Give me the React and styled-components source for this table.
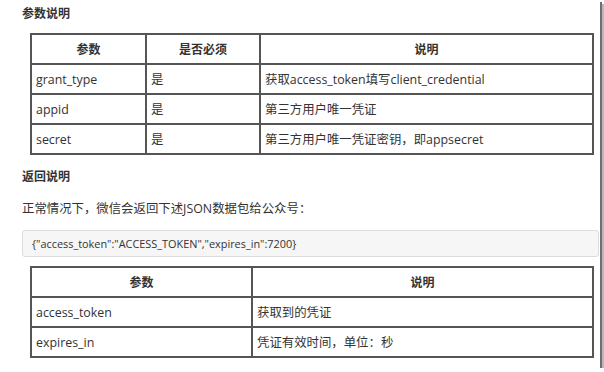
import React from "react";
import styled, { createGlobalStyle } from "styled-components";

const Global = createGlobalStyle`
  html, body { margin: 0; padding: 0; background: #fff; }
  body { font-family: "Open Sans", "Noto Sans CJK SC", sans-serif; color: #333; }
`;

const Frame = styled.div`
  width: 600px;
  height: 368px;
  box-sizing: border-box;
  padding-left: 22px;
  background: #fff;
  box-shadow: 2px 2px 0 #6f6f6f, 4px 4px 0 #b8b8b8;
  overflow: hidden;
  display: flex;
  flex-direction: column;
  font-size: 12.4px;
`;

const Heading = styled.div`
  height: 20px;
  line-height: 20px;
  font-weight: bold;
  font-size: 12px;
  margin-top: ${(p) => p.$mt}px;
`;

const Para = styled.div`
  height: 20px;
  line-height: 20px;
  font-size: 12.4px;
  margin-top: ${(p) => p.$mt}px;
`;

const Code = styled.div`
  margin-top: ${(p) => p.$mt}px;
  width: 577px;
  height: 27px;
  box-sizing: border-box;
  border: 1px solid #dcdcdc;
  border-radius: 3px;
  background: #f6f6f6;
  padding-left: 9px;
  line-height: 25px;
  font-size: 10.9px;
  white-space: nowrap;
`;

const Table = styled.table`
  margin-top: ${(p) => p.$mt}px;
  margin-left: 8px;
  width: 564px;
  border-collapse: collapse;
  table-layout: fixed;
  font-size: 12.4px;
`;

const Row = styled.tr`
  height: 30px;
`;

const Th = styled.th`
  border: 2px solid #555;
  font-weight: bold;
  font-size: 12px;
  text-align: center;
  padding: 0 5px;
  width: ${(p) => (p.$w ? `${p.$w}px` : "auto")};
`;

const Td = styled.td`
  border: 2px solid #555;
  padding: 0 4px;
  text-align: left;
  white-space: nowrap;
`;

const params = [
  ["grant_type", "是", "获取access_token填写client_credential"],
  ["appid", "是", "第三方用户唯一凭证"],
  ["secret", "是", "第三方用户唯一凭证密钥，即appsecret"],
];

const results = [
  ["access_token", "获取到的凭证"],
  ["expires_in", "凭证有效时间，单位：秒"],
];

export default function App() {
  return (
    <>
      <Global />
      <Frame>
        <Heading $mt={4}>参数说明</Heading>
        <Table $mt={9}>
          <thead>
            <Row>
              <Th $w={103}>参数</Th>
              <Th $w={102}>是否必须</Th>
              <Th>说明</Th>
            </Row>
          </thead>
          <tbody>
            {params.map((r) => (
              <Row key={r[0]}>
                <Td>{r[0]}</Td>
                <Td>{r[1]}</Td>
                <Td>{r[2]}</Td>
              </Row>
            ))}
          </tbody>
        </Table>
        <Heading $mt={12}>返回说明</Heading>
        <Para $mt={12}>正常情况下，微信会返回下述JSON数据包给公众号：</Para>
        <Code $mt={11}>{'{"access_token":"ACCESS_TOKEN","expires_in":7200}'}</Code>
        <Table $mt={9}>
          <thead>
            <Row>
              <Th $w={209}>参数</Th>
              <Th>说明</Th>
            </Row>
          </thead>
          <tbody>
            {results.map((r) => (
              <Row key={r[0]}>
                <Td>{r[0]}</Td>
                <Td>{r[1]}</Td>
              </Row>
            ))}
          </tbody>
        </Table>
      </Frame>
    </>
  );
}
